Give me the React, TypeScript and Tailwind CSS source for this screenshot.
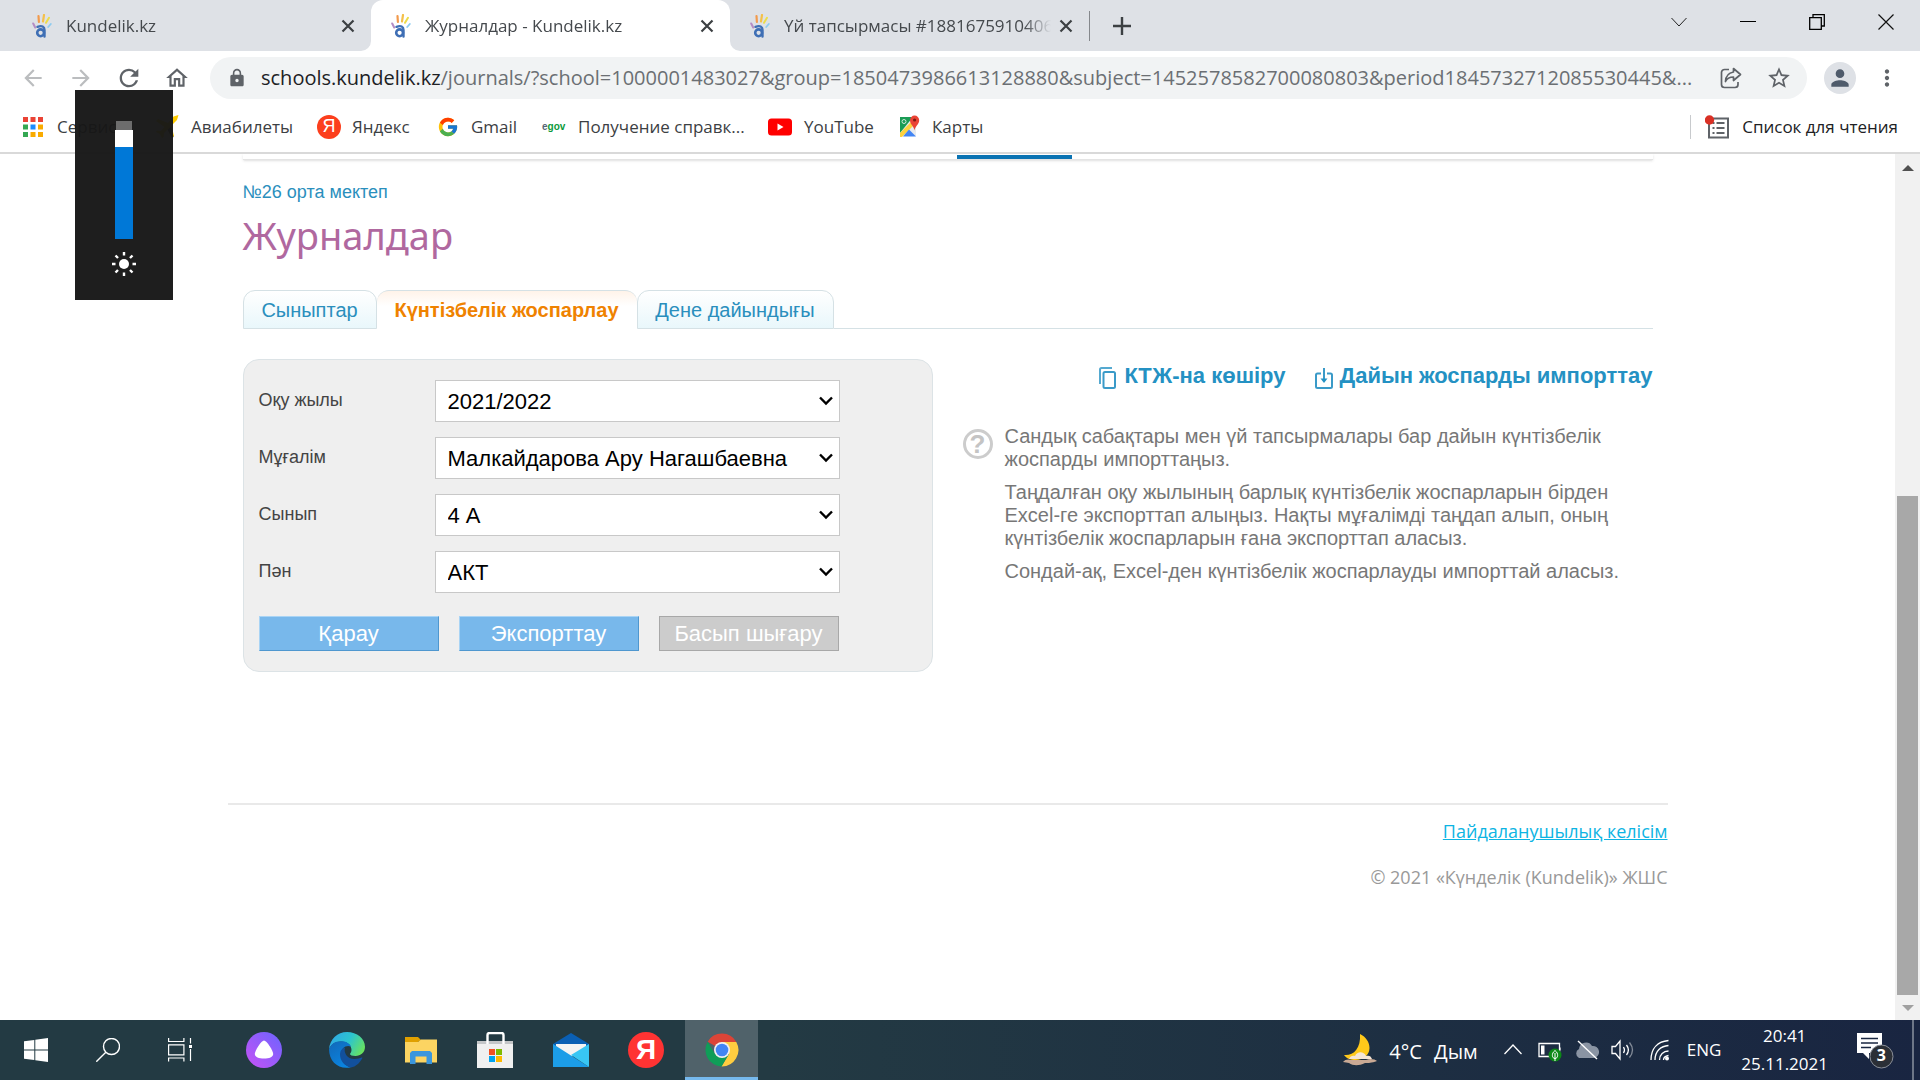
import React from 'react';
import {
  MdArrowBack,
  MdArrowForward,
  MdLock,
  MdMoreVert,
  MdOutlineHome,
  MdPerson,
  MdRefresh,
  MdStarBorder,
} from 'react-icons/md';
import { FcGoogle } from 'react-icons/fc';

const tabs = [
  { title: 'Kundelik.kz', active: false },
  { title: 'Журналдар - Kundelik.kz', active: true },
  { title: 'Үй тапсырмасы #1881675910406', active: false },
];

const fields = [
  { id: 'year', label: 'Оқу жылы', value: '2021/2022' },
  { id: 'teacher', label: 'Мұғалім', value: 'Малкайдарова Ару Нагашбаевна' },
  { id: 'class', label: 'Сынып', value: '4 А' },
  { id: 'subject', label: 'Пән', value: 'АКТ' },
];

function KundelikIcon() {
  return (
    <svg className="h-6 w-5 shrink-0" viewBox="0 0 20 24" fill="none" strokeLinecap="round">
      <path d="M1.2 9.500l2 4" stroke="#b58cc4" strokeWidth="2" />
      <path d="M6.500 2l.4 6" stroke="#f29a4c" strokeWidth="2.200" />
      <path d="M12 1l-1 6.500" stroke="#f4c04a" strokeWidth="2.200" />
      <path d="M17 3.800l-3 5" stroke="#ecdc4a" strokeWidth="2" />
      <path d="M18.800 10l-2.600 3" stroke="#8ccbf0" strokeWidth="1.800" />
      <circle cx="8.600" cy="18.800" r="3.400" stroke="#3f6fb5" strokeWidth="2.600" />
      <path d="M5.500 12.800c4.500-1.600 7-.2 7 3.200v6.500" stroke="#3f6fb5" strokeWidth="2.400" />
    </svg>
  );
}

function CloseIcon() {
  return (
    <svg className="h-3.5 w-3.5" viewBox="0 0 14 14" stroke="#3c4043" strokeWidth="2.200">
      <path d="M1.500 1.500l11 11M12.500 1.500l-11 11" />
    </svg>
  );
}

function TabStrip() {
  return (
    <div className="flex h-[51px] items-stretch bg-[#dee1e6] pl-3">
      {tabs.map((tab) => (
        <div
          key={tab.title}
          className={`relative flex w-[359px] items-center pl-5 pr-4 ${tab.active ? 'rounded-t-xl bg-white' : ''}`}
        >
          {tab.active && (
            <>
              <svg className="absolute bottom-0 -left-2.5 h-2.5 w-2.5" viewBox="0 0 10 10" fill="#fff">
                <path d="M10 0V10H0A10 10 0 0 0 10 0" />
              </svg>
              <svg className="absolute bottom-0 -right-2.5 h-2.5 w-2.5" viewBox="0 0 10 10" fill="#fff">
                <path d="M0 0V10H10A10 10 0 0 1 0 0" />
              </svg>
            </>
          )}
          <KundelikIcon />
          <span className="ml-3.5 flex-1 overflow-hidden whitespace-nowrap text-[17px] text-[#45494d] [mask-image:linear-gradient(to_right,black_90%,transparent)]">
            {tab.title}
          </span>
          <button aria-label="Жабу" className="ml-2">
            <CloseIcon />
          </button>
        </div>
      ))}
      <div className="flex items-center">
        <div className="h-[30px] w-px bg-[#85888c]" />
        <button aria-label="Жаңа қойынды" className="ml-[23px]">
          <svg className="h-[18px] w-[18px]" viewBox="0 0 18 18" stroke="#3c4043" strokeWidth="2.400">
            <path d="M9 0v18M0 9h18" />
          </svg>
        </button>
      </div>
      <div className="ml-auto flex h-[43px] items-center">
        <button aria-label="Іздеу" className="flex w-[69px] justify-center">
          <svg className="h-4 w-4" viewBox="0 0 16 16" fill="none" stroke="#222">
            <path d="M.5 4l7.500 8 7.500-8" />
          </svg>
        </button>
        <button aria-label="Жию" className="flex w-[69px] justify-center">
          <svg className="h-4 w-4" viewBox="0 0 16 16">
            <path d="M0 7h16v1H0z" />
          </svg>
        </button>
        <button aria-label="Кішірейту" className="flex w-[69px] justify-center">
          <svg className="h-4 w-4" viewBox="0 0 16 16" fill="none" stroke="#000" strokeWidth="1.300">
            <path d="M.7 3.700h11.600v11.600H.7zM4 3.500V.7h11.300V12H12.500" />
          </svg>
        </button>
        <button aria-label="Терезені жабу" className="flex w-[69px] justify-center">
          <svg className="h-4 w-4" viewBox="0 0 16 16" stroke="#111" strokeWidth="1.200">
            <path d="M.5.5l15 15M15.500.5l-15 15" />
          </svg>
        </button>
      </div>
    </div>
  );
}

function AddressBar() {
  return (
    <div className="flex h-[54px] items-center bg-white px-5 text-[#5f6368]">
      <button aria-label="Артқа" className="mr-[22px] text-[#bbbdbf]"><MdArrowBack size={26} /></button>
      <button aria-label="Алға" className="mr-[21px] text-[#bbbdbf]"><MdArrowForward size={26} /></button>
      <button aria-label="Жаңарту" className="mr-[21px]"><MdRefresh size={28} /></button>
      <button aria-label="Басты бет" className="mr-5"><MdOutlineHome size={26} /></button>
      <div className="flex h-[42px] min-w-0 flex-1 items-center rounded-full bg-[#f1f3f4] pl-[17px] pr-[15px]">
        <MdLock size={20} className="shrink-0" />
        <div
          role="textbox"
          aria-label="Мекенжай"
          className="ml-3.5 min-w-0 flex-1 overflow-hidden text-ellipsis whitespace-nowrap text-[20px] text-[#6b6f73]"
        >
          <span className="text-[#202124]">schools.kundelik.kz</span>
          /journals/?school=1000001483027&amp;group=1850473986613128880&amp;subject=1452578582700080803&amp;period1845732712085530445&amp;...
        </div>
        <button aria-label="Бөлісу" className="ml-5">
          <svg className="h-[22px] w-[22px]" viewBox="0 0 22 22" fill="none" stroke="#5f6368" strokeWidth="1.700" strokeLinejoin="round">
            <path d="M9 2.500H4.500a3 3 0 0 0-3 3v12a3 3 0 0 0 3 3h10.500a3 3 0 0 0 3-3V15" />
            <path d="M13.500 1.500l7 6-7 6v-3.500c-4 0-6.500 1.300-8 4.500.3-5.500 3-8.700 8-9.500z" />
          </svg>
        </button>
        <button aria-label="Бетбелгі" className="ml-6"><MdStarBorder size={26} /></button>
      </div>
      <button aria-label="Профиль" className="ml-[17px] flex h-8 w-8 items-center justify-center rounded-full bg-[#dee1e6] text-[#4f5b6b]">
        <MdPerson size={26} />
      </button>
      <button aria-label="Мәзір" className="ml-[18px]"><MdMoreVert size={26} /></button>
    </div>
  );
}

const appDots = [
  '#ea4335', '#ea4335', '#ea4335',
  '#34a853', '#1a8cff', '#f9ab00',
  '#34a853', '#f9ab00', '#f9ab00',
];

function BookmarkBar() {
  return (
    <nav className="flex h-[49px] items-center border-b-2 border-[#d9d9d9] bg-white pb-1 pl-[23px] pr-[22px] text-[17px] whitespace-nowrap text-[#3c4043]">
      <a href="#" className="flex w-[132px] items-center gap-3.5">
        <svg className="h-5 w-5" viewBox="0 0 20 20">
          {appDots.map((c, i) => (
            <rect key={i} x={(i % 3) * 7.5} y={Math.floor(i / 3) * 7.5} width="5" height="5" fill={c} />
          ))}
        </svg>
        Сервисы
      </a>
      <a href="#" className="flex w-[162px] items-center gap-3">
        <svg className="h-6 w-6" viewBox="0 0 24 24">
          <path d="M23.500 0l-5 1.500L13 8 3 4 1 6l8.500 6L6 16l-4-.5-1 1.500 4 2 2 4 1.500-1L9 18l3.500-3.500L17 23l2-2-2.500-10.500L22 5z" fill="#fc0" />
          <path d="M16 12l2.500 10L17 23l-4.500-8.500z" fill="#445" />
        </svg>
        Авиабилеты
      </a>
      <a href="#" className="flex w-[120px] items-center gap-[11px]">
        <span className="flex h-6 w-6 items-center justify-center rounded-full bg-[#fc3f1d] font-['Liberation_Sans'] text-[18px] text-white">Я</span>
        Яндекс
      </a>
      <a href="#" className="flex w-[105px] items-center gap-3">
        <FcGoogle size={22} />
        Gmail
      </a>
      <a href="#" className="flex w-[226px] items-center gap-3">
        <span className="w-6 font-['Liberation_Sans'] text-[10px] font-bold text-[#0a9a3a]">
          <span className="text-[#567]">e</span>gov
        </span>
        Получение справк...
      </a>
      <a href="#" className="flex w-[130px] items-center gap-3">
        <svg className="h-[18px] w-6" viewBox="0 0 24 18">
          <rect y=".5" width="24" height="17" rx="3.500" fill="#f00" />
          <path d="M9.500 5.500v7l6-3.500z" fill="#fff" />
        </svg>
        YouTube
      </a>
      <a href="#" className="flex items-center gap-3">
        <svg className="h-6 w-[22px]" viewBox="0 0 22 24">
          <path d="M2 3h16v18H2z" fill="#e8eaed" />
          <path d="M2 2h13L2 18z" fill="#1a9c55" />
          <path d="M2 18L14 6l3 3L4 22H2z" fill="#fdd23e" />
          <path d="M5 21.500l6-7 7 7z" fill="#4285f4" />
          <circle cx="6" cy="6.500" r="2" fill="none" stroke="#cfe8d8" />
          <path d="M16.500 15.500C16 11 12 9.500 12 5.200a4.600 4.600 0 0 1 9.200 0c0 4.300-4.200 5.800-4.700 10.300z" fill="#ea4335" />
          <circle cx="16.600" cy="5" r="1.600" fill="#7d1a12" />
        </svg>
        Карты
      </a>
      <div className="ml-auto h-6 w-px bg-[#c8cacd]" />
      <button className="ml-3.5 flex items-center gap-[13px] text-[#202124]">
        <svg className="h-6 w-6" viewBox="0 0 24 24">
          <rect x="4" y="3.500" width="19" height="19" fill="none" stroke="#5f6368" strokeWidth="2" />
          <path d="M7.500 8h2M7.500 13h2M7.500 18h2M11.500 8h8M11.500 13h8M11.500 18h8" stroke="#5f6368" strokeWidth="2" />
          <circle cx="4.500" cy="5" r="4.700" fill="#d93025" />
        </svg>
        Список для чтения
      </button>
    </nav>
  );
}

// Windows brightness flyout that sits above the browser
function BrightnessFlyout() {
  return (
    <div className="absolute top-[90px] left-[75px] flex h-[210px] w-[98px] flex-col items-center bg-[#171717]/97 pt-[31px]">
      <div className="h-[9px] w-4 bg-[#6d6d6d]" />
      <div className="h-[17px] w-[18px] bg-white" />
      <div className="h-[92px] w-[18px] bg-[#0078d7]" />
      <svg className="mt-[13px] h-6 w-6" viewBox="0 0 24 24" stroke="#fff" strokeWidth="2.400">
        <circle cx="12" cy="12" r="5" fill="#fff" stroke="none" />
        <path d="M12 0v3.500M12 20.500V24M0 12h3.500M20.500 12H24M3.500 3.500l2.500 2.500M18 18l2.500 2.500M20.500 3.500L18 6M6 18l-2.500 2.500" />
      </svg>
    </div>
  );
}

function PageTabs() {
  const side = 'border-[#d5e1e5] bg-linear-to-b from-white to-[#e9f7fb] text-[#2a8fbd]';
  return (
    <div className="mt-7 flex h-[39px] text-[20px]">
      <a href="#" className={`flex w-[134px] items-center justify-center rounded-t-xl border ${side}`}>Сыныптар</a>
      <a href="#" className="flex w-[260px] items-center justify-center rounded-t-xl border-t border-[#d5e1e5] bg-linear-to-b from-[#fff3e9] to-white to-40% font-bold text-[#ef8200]">
        Күнтізбелік жоспарлау
      </a>
      <a href="#" className={`flex w-[197px] items-center justify-center rounded-t-xl border ${side}`}>Дене дайындығы</a>
      <div className="flex-1 border-b border-[#d5e1e5]" />
    </div>
  );
}

function PlanForm() {
  const blue = 'h-[35px] w-[180px] border border-t-[#a9d4f5] border-l-[#a9d4f5] border-r-[#4f97cf] border-b-[#4f97cf] bg-[#78b8eb] text-white';
  return (
    <form className="w-[690px] shrink-0 rounded-2xl border border-[#dce3e6] bg-[#efefef] px-[15px] py-5">
      <div className="flex flex-col gap-[15px]">
        {fields.map((f) => (
          <div key={f.id} className="flex items-center">
            <label htmlFor={f.id} className="w-[176px] pb-0.5 text-[18px] text-[#444]">{f.label}</label>
            <div className="relative">
              <select
                id={f.id}
                defaultValue={f.value}
                className="block h-[42px] w-[405px] appearance-none border border-[#c8c8c8] bg-white pl-3 text-[22px] text-black"
              >
                <option>{f.value}</option>
              </select>
              <svg className="pointer-events-none absolute top-4 right-[6px] h-2.5 w-4" viewBox="0 0 16 10" fill="none" stroke="#000" strokeWidth="2.400">
                <path d="M2 1.500l6 6 6-6" />
              </svg>
            </div>
          </div>
        ))}
      </div>
      <div className="mt-[23px] flex gap-5 text-[22px] leading-[30px]">
        <button type="button" className={blue}>Қарау</button>
        <button type="button" className={blue}>Экспорттау</button>
        <button type="button" disabled className="h-[35px] w-[180px] border border-[#a8a8a8] bg-[#ccc] text-white">Басып шығару</button>
      </div>
    </form>
  );
}

function PlanHelp() {
  return (
    <section className="min-w-0 flex-1">
      <div className="flex justify-end gap-[30px] text-[22px] leading-[34px] font-bold whitespace-nowrap text-[#2491c3]">
        <a href="#" className="flex items-center gap-2">
          <svg className="mt-1 h-[22px] w-[17px]" viewBox="0 0 17 22" fill="none" strokeWidth="2">
            <path d="M1 17V2.500A1.500 1.500 0 0 1 2.500 1H13" stroke="#55a9d0" />
            <rect x="4.500" y="5" width="11.500" height="16" rx="1.500" stroke="#3a9ac8" />
          </svg>
          КТЖ-на көшіру
        </a>
        <a href="#" className="flex items-center gap-1.5">
          <svg className="mt-1 h-[22px] w-[18px]" viewBox="0 0 18 22" fill="none" stroke="#3a9ac8" strokeWidth="2">
            <path d="M6 6.500H2.500A1.500 1.500 0 0 0 1 8v11.500A1.500 1.500 0 0 0 2.500 21h13a1.500 1.500 0 0 0 1.500-1.500V8a1.500 1.500 0 0 0-1.500-1.500H12M9 1v12" />
            <path d="M5.500 11.500L9 16l3.500-4.500z" fill="#2491c3" stroke="none" />
          </svg>
          Дайын жоспарды импорттау
        </a>
      </div>
      <div className="mt-8 flex items-start gap-3 pl-[30px]">
        <span className="mt-1 flex h-[30px] w-[30px] shrink-0 items-center justify-center rounded-full border-[3px] border-[#ccc] text-[26px] font-black text-[#c4c4c4]">?</span>
        <div className="flex max-w-[620px] flex-col gap-2.5 text-[20px] leading-[23px] text-[#777]">
          <p>Сандық сабақтары мен үй тапсырмалары бар дайын күнтізбелік жоспарды импорттаңыз.</p>
          <p>Таңдалған оқу жылының барлық күнтізбелік жоспарларын бірден Excel-ге экспорттап алыңыз. Нақты мұғалімді таңдап алып, оның күнтізбелік жоспарларын ғана экспорттап аласыз.</p>
          <p>Сондай-ақ, Excel-ден күнтізбелік жоспарлауды импорттай аласыз.</p>
        </div>
      </div>
    </section>
  );
}

function JournalPage() {
  return (
    <main className="min-w-0 flex-1 overflow-hidden bg-white font-['Liberation_Sans',sans-serif]">
      <div className="mx-auto max-w-[1440px]">
        <div className="px-[15px]">
          <div className="flex h-1.5 items-end border-b border-[#e4e4e4] shadow-sm">
            <div className="ml-[714px] h-1 w-[115px] bg-[#0a73b3]" />
          </div>
          <a href="#" className="mt-5 block text-[18px] leading-6 text-[#2a8fbd]">№26 орта мектеп</a>
          <h1 className="mt-1 font-['Noto_Sans',sans-serif] text-[38px] leading-[54px] text-[#b0689f]">Журналдар</h1>
          <PageTabs />
          <div className="mt-[30px] flex">
            <PlanForm />
            <PlanHelp />
          </div>
        </div>
        <footer className="mt-[131px] flex flex-col items-end gap-[22px] border-t-2 border-[#e9e9e9] pt-3.5 font-['Open_Sans',sans-serif] text-[18px] leading-6">
          <a href="#" className="text-[#0db4e3] underline">Пайдаланушылық келісім</a>
          <p className="text-[#999]">© 2021 «Күнделік (Kundelik)» ЖШС</p>
        </footer>
      </div>
    </main>
  );
}

function PageScrollbar() {
  return (
    <div className="flex w-[25px] shrink-0 flex-col items-center bg-[#f1f1f1]">
      <svg className="mt-[11px] h-1.5 w-3" viewBox="0 0 12 6"><path d="M6 0l6 6H0z" fill="#505050" /></svg>
      <div className="mt-[325px] mb-2.5 w-[21px] flex-1 bg-[#a8a8a8]" />
      <svg className="mb-[9px] h-1.5 w-3" viewBox="0 0 12 6"><path d="M6 6l6-6H0z" fill="#a0a0a0" /></svg>
    </div>
  );
}

function Taskbar() {
  return (
    <div className="flex h-[60px] shrink-0 items-stretch bg-linear-to-r from-[#233a43] from-40% to-[#192541] text-white">
      <button aria-label="Пуск" className="flex w-[72px] items-center justify-center">
        <svg className="h-6 w-6" viewBox="0 0 24 24" fill="#fff">
          <path d="M0 3.300L10.300 2v9.500H0zM11.300 1.700L24 0v11.500H11.300zM0 12.500h10.300V22L0 20.700zM11.300 12.500H24V24l-12.700-1.700z" />
        </svg>
      </button>
      <button aria-label="Поиск" className="flex w-[72px] items-center justify-center">
        <svg className="h-6 w-6" viewBox="0 0 24 24" fill="none" stroke="#fff" strokeWidth="1.400">
          <circle cx="15.500" cy="8.500" r="8" />
          <path d="M9.800 14.200L.3 23.700" />
        </svg>
      </button>
      <button aria-label="Представление задач" className="mr-[30px] flex w-[72px] items-center justify-center">
        <svg className="h-6 w-6" viewBox="0 0 24 24" fill="none" stroke="#fff" strokeWidth="1.200">
          <path d="M.6 0v3.500h15.300V0M.6 23.500V20h15.300v3.500M.6 6.800h15.300v10H.6zM22.500 0v5.500M22.500 11v12" />
          <path d="M21 7h3v3h-3z" fill="#fff" stroke="none" />
        </svg>
      </button>
      <button aria-label="Алиса" className="mr-[47px] flex items-center">
        <svg className="h-9 w-9" viewBox="0 0 36 36">
          <defs>
            <linearGradient id="alice" x1="0" y1="1" x2="1" y2="0">
              <stop offset="0" stopColor="#c752f5" />
              <stop offset="1" stopColor="#6b64ff" />
            </linearGradient>
          </defs>
          <circle cx="18" cy="18" r="18" fill="url(#alice)" />
          <path d="M18 8.500c2.500 0 9.200 10 9.200 13.500 0 3.200-4.200 4.500-9.200 4.500S8.800 25.200 8.800 22C8.800 18.500 15.500 8.500 18 8.500z" fill="#fff" />
        </svg>
      </button>
      <button aria-label="Microsoft Edge" className="mr-10 flex items-center">
        <svg className="h-9 w-9" viewBox="0 0 36 36">
          <defs>
            <linearGradient id="edgeTop" x1="0" y1=".3" x2="1" y2=".7">
              <stop offset="0" stopColor="#2fa9e6" />
              <stop offset=".5" stopColor="#2cc4cf" />
              <stop offset="1" stopColor="#6be35a" />
            </linearGradient>
            <linearGradient id="edgeLeft" x1="0" y1="0" x2=".6" y2="1">
              <stop offset="0" stopColor="#1268b8" />
              <stop offset="1" stopColor="#0a84e0" />
            </linearGradient>
          </defs>
          <path d="M0 17C1 7 8.500 0 18 0c10 0 18 6.500 18 14.800 0 6-4.500 9.200-9.500 9.200-3.500 0-5.500-1-5.500-2 0-.8 1.500-1.500 1.500-4C22.500 13 18 9.500 12 9.500S2 12.500 0 17z" fill="url(#edgeTop)" />
          <path d="M0 17c2-5 6-7.700 12-7.700 5 0 8.500 2 10 5.200-5-2-10 1.500-10 8 0 6.500 4.500 11.500 10 12.800C10 38 0 30 0 17z" fill="url(#edgeLeft)" />
          <path d="M16 15.500c-1.500 5 2 11.500 9.500 11.500 3 0 5.500-.8 7-1.500 1-.4 1 .5.500 1.200C30 31.500 27 34.500 22 35.400 15 34 10.800 28 11 22c.2-3.500 2.300-5.800 5-6.500z" fill="#12509c" />
        </svg>
      </button>
      <button aria-label="Проводник" className="mr-10 flex items-center">
        <svg className="h-[27px] w-8" viewBox="0 0 32 27">
          <path d="M0 0h13l3 3-3 2H0z" fill="#e0a000" />
          <path d="M0 5h13l3-2.500h16V25.500H0z" fill="#fcd462" />
          <path d="M5 27V16l2-2h18l2 2v11h-5.500v-7.500h-11V27z" fill="#3a96dd" />
        </svg>
      </button>
      <button aria-label="Microsoft Store" className="mr-10 flex items-center">
        <svg className="h-9 w-9" viewBox="0 0 36 36">
          <path d="M0 9h36v27H0z" fill="#f0f0f0" />
          <path d="M0 9h36v3H0z" fill="#c4c6c8" />
          <path d="M10.500 12V3a2 2 0 0 1 2-2h12a2 2 0 0 1 2 2v9" fill="none" stroke="#fff" strokeWidth="2.400" />
          <path d="M12 17h6v6h-6z" fill="#f25022" />
          <path d="M19 17h6v6h-6z" fill="#7fba00" />
          <path d="M12 24h6v6h-6z" fill="#00a4ef" />
          <path d="M19 24h6v6h-6z" fill="#ffb900" />
        </svg>
      </button>
      <button aria-label="Почта" className="mr-[39px] flex items-center">
        <svg className="h-[34px] w-9" viewBox="0 0 36 34">
          <path d="M0 11L18 0l18 11v5H0z" fill="#0a5fb4" />
          <path d="M3 11h30v6L18 24 3 17z" fill="#f3f3f3" />
          <path d="M0 11l36 23H0z" fill="#1c9de8" />
          <path d="M36 11v23L18 22z" fill="#38c6f4" />
        </svg>
      </button>
      <button aria-label="Яндекс" className="mr-[21px] flex items-center">
        <span className="flex h-9 w-9 items-center justify-center rounded-full bg-[#f33] font-['Liberation_Sans'] text-[28px] font-bold">Я</span>
      </button>
      <button aria-label="Google Chrome" className="flex w-[73px] items-center justify-center border-b-[3px] border-[#76b9ed] bg-[#50626a] pt-[3px]">
        <svg className="h-[34px] w-[34px]" viewBox="0 0 34 34">
          <path d="M17 17L2.700 8.700A16.500 16.500 0 0 1 31.300 9H17z" fill="#db4437" />
          <path d="M17 9h14.300A16.500 16.500 0 0 1 16.500 33.500L24 21z" fill="#ffcd40" />
          <path d="M2.700 8.700A16.500 16.500 0 0 0 16.500 33.500L23.900 21 10 21z" fill="#0f9d58" />
          <circle cx="17" cy="17" r="8" fill="#f1f1f1" />
          <circle cx="17" cy="17" r="6.300" fill="#4285f4" />
        </svg>
      </button>

      <div className="ml-auto flex items-center">
        <button className="flex items-center pt-1 text-[20px]">
          <svg className="mr-3 mb-1 h-8 w-[34px]" viewBox="0 0 34 32">
            <path d="M17 0c6 3 9.500 8 9.500 14 0 7-6 12-14 12C7 26 3 24 1 21c9 1 17-6 16-21z" fill="#ffc91a" />
            <path d="M6 25c1-3 4-4 6-3 2-5 9-5 11 0 3-1 5 0 6 3z" fill="#f5e6d6" />
            <path d="M0 28c2-3 6-3 8-2h15c4-2 9-1 11 1-6 2-8 2-12 2-6 3-12 3-16 0z" fill="#c9a994" />
          </svg>
          <span className="mr-3">4°C</span>
          <span>Дым</span>
        </button>
        <button aria-label="Скрытые значки" className="ml-[26px]">
          <svg className="h-5 w-[18px]" viewBox="0 0 18 20" fill="none" stroke="#fff" strokeWidth="1.300"><path d="M.5 14L9 5l8.500 9" /></svg>
        </button>
        <svg className="ml-4 h-6 w-6" viewBox="0 0 24 24">
          <path d="M1 5.500h20.500v13H1zM22 9.500v3" fill="none" stroke="#fff" strokeWidth="1.300" />
          <path d="M3 7.500h3.500v9H3z" fill="#fff" />
          <circle cx="17" cy="17" r="6.500" fill="#0c8a16" />
          <path d="M17 12.500c4 3 3 8 0 8s-4-5 0-8zM17 15v8" fill="none" stroke="#fff" />
        </svg>
        <svg className="ml-3 h-6 w-[25px]" viewBox="0 0 25 24">
          <path d="M5 20a5 5 0 0 1 0-9 7 7 0 0 1 13-3 6 6 0 0 1 2 12z" fill="#8a94a3" />
          <path d="M4 3l19 18" stroke="#fff" strokeWidth="1.400" />
        </svg>
        <svg className="ml-3 h-6 w-[23px]" viewBox="0 0 23 24" fill="none" stroke="#fff" strokeWidth="1.300">
          <path d="M1 8.500h3.500L9 3v18l-4.500-5.500H1zM12.500 9c1.300 2 1.300 4 0 6M15.500 7c2.500 3.300 2.500 6.700 0 10" />
          <path d="M18.500 4.500c4 5 4 10 0 15" opacity=".45" />
        </svg>
        <svg className="ml-4 h-6 w-[19px]" viewBox="0 0 19 24" fill="none" stroke="#fff" strokeWidth="1.300">
          <path d="M1 22C1 10 8 3.500 18.500 2.500M5 22C5 13 11 8 18.500 7.500M9.500 22c0-5.500 4-9 9-9M13.500 22c0-2.500 2-4 5-4.500" />
          <circle cx="17" cy="20.500" r="2" fill="#fff" stroke="none" />
        </svg>
        <span className="ml-[18px] text-[17px]">ENG</span>
        <button className="ml-5 text-center text-[17px] leading-7">
          <time className="block">20:41</time>
          <time className="block">25.11.2021</time>
        </button>
        <button aria-label="Уведомления" className="relative ml-7 h-[38px] w-[38px]">
          <svg className="h-full w-full" viewBox="0 0 38 38">
            <path d="M1 2h25v20H13v6l-6-6H1z" fill="#fff" />
            <path d="M5 7.500h17M5 12h17M5 16.500h10" stroke="#1a2742" strokeWidth="1.300" />
            <circle cx="25.500" cy="25.500" r="11.500" fill="#2b2f36" stroke="#8a8f98" />
          </svg>
          <span className="absolute right-[8px] bottom-0.5 text-[16px] leading-6 font-bold">3</span>
        </button>
        <div className="ml-[18px] h-full w-[2px] bg-[#6d7687]" />
        <div className="w-1.5" />
      </div>
    </div>
  );
}

export default function App() {
  return (
    <div className="relative flex h-screen flex-col overflow-hidden bg-white font-['Open_Sans','Noto_Sans',sans-serif]">
      <TabStrip />
      <AddressBar />
      <BookmarkBar />
      <div className="flex min-h-0 flex-1">
        <JournalPage />
        <PageScrollbar />
      </div>
      <Taskbar />
      <BrightnessFlyout />
    </div>
  );
}
